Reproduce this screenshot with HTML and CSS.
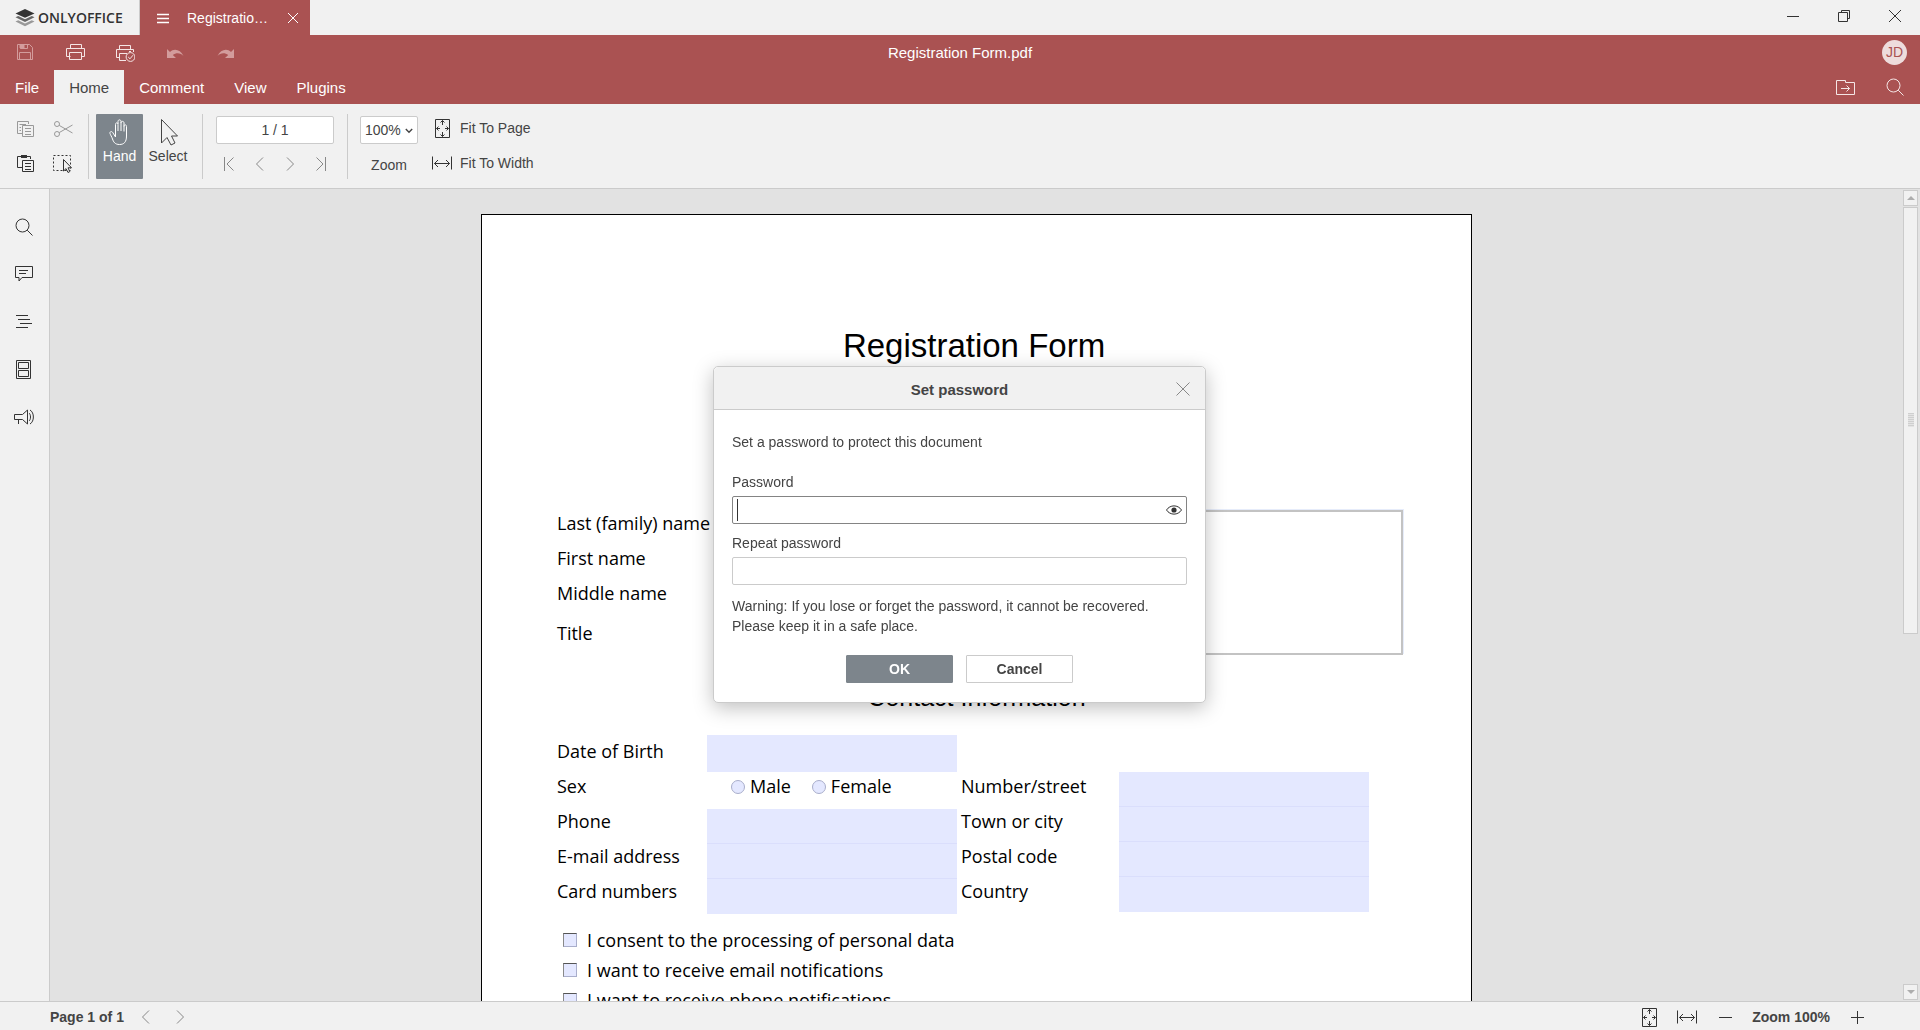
FILE: index.html
```html
<!DOCTYPE html>
<html lang="en">

<head>
    <meta charset="UTF-8">
    <meta name="viewport" content="width=device-width, initial-scale=1.0">
    <title>Registration Form.pdf</title>
    <link rel="stylesheet" href="styles.css">
</head>

<body>

    <!-- shared icons -->
    <svg class="sprite" aria-hidden="true">
        <symbol id="i-search" viewBox="0 0 20 20">
            <circle cx="8.5" cy="8.5" r="6.5" />
            <path d="M13.2 13.2L18.5 18.5" />
        </symbol>
        <symbol id="i-prev" viewBox="0 0 20 20"><path d="M13 3.5L6.5 10L13 16.5" /></symbol>
        <symbol id="i-next" viewBox="0 0 20 20"><path d="M7 3.5L13.5 10L7 16.5" /></symbol>
        <symbol id="i-page" viewBox="0 0 20 20">
            <path d="M3.5 1.5H17.5V19.5H3.5Z" />
            <path d="M10.5 2.5V7M8.5 4.5L10.5 2.5L12.5 4.5M10.5 18.5V14M8.5 16.5L10.5 18.5L12.5 16.5M4.5 10.5H8M6.5 8.5L4.5 10.5L6.5 12.5M16.5 10.5H13M14.5 8.5L16.5 10.5L14.5 12.5" />
        </symbol>
        <symbol id="i-width" viewBox="0 0 20 20">
            <path d="M.5 3.5V16.5M19.5 3.5V16.5M2.5 10.5H17.5M6 7L2.5 10.5L6 14M14 7L17.5 10.5L14 14" />
        </symbol>
        <symbol id="i-close" viewBox="0 0 20 20"><path d="M3.5 3.5L16.5 16.5M16.5 3.5L3.5 16.5" /></symbol>
    </svg>

    <header class="titlebar">
        <div class="brand">
            <svg class="brandIcon" viewBox="0 0 20 18">
                <path d="M10 0L19.5 4.4L10 8.8L.5 4.4Z" fill="#333" />
                <path d="M.5 8.3L3.2 7.1L10 10.2L16.8 7.1L19.5 8.3L10 12.9Z" fill="#666" />
                <path d="M.5 12.5L3.2 11.3L10 14.5L16.8 11.3L19.5 12.5L10 17.2Z" fill="#999" />
            </svg>
            <span>ONLYOFFICE</span>
        </div>
        <div class="docTab">
            <svg class="icon" viewBox="0 0 20 20"><path d="M4 6.5H16M4 10.5H16M4 14.5H16" stroke-width="1.4" /></svg>
            <span>Registratio…</span>
            <button class="tabClose" aria-label="Close tab"><svg class="icon" viewBox="0 0 20 20"><path d="M5 5L15 15M15 5L5 15" /></svg></button>
        </div>
        <div class="windowButtons">
            <button aria-label="Minimize"><svg class="icon" viewBox="0 0 20 20"><path d="M4 10.5H16" /></svg></button>
            <button aria-label="Restore"><svg class="icon" viewBox="0 0 20 20"><path d="M4.5 6.5H13.5V15.5H4.5ZM7.5 6.5V4.5H15.5V12.5H13.5" /></svg></button>
            <button aria-label="Close"><svg class="icon" viewBox="0 0 20 20"><path d="M4 4L16 16M16 4L4 16" /></svg></button>
        </div>
    </header>

    <div class="header">
        <div class="quickRow">
            <div class="quickButtons">
                <button class="dim" aria-label="Save"><svg class="icon" viewBox="0 0 20 20"><path d="M2.5 1.5H14.5L17.5 4.5V16.5H2.5ZM5.5 1.5V5.5H12.5V1.5M4.5 16.5V9.5H15.5V16.5" /><path d="M5 2H9V5H5Z" fill="currentColor" /></svg></button>
                <button aria-label="Print"><svg class="icon" viewBox="0 0 20 20"><path d="M5.5 5.5V1.5H16.5V5.5M5.5 13.5H1.5V5.5H19.5V13.5H16.5M4.5 9.5H16.5V16.5H4.5Z" /></svg></button>
                <button aria-label="Quick print"><svg class="icon" viewBox="0 0 20 20"><path d="M4.5 6.5V2.5H15.5V6.5M4.5 14.5H1.5V6.5H18.5V9M11 17.5H4.5V10.5H12M14 8.5H16" /><circle cx="15.5" cy="14" r="4.4" /><path d="M13.2 14L15 15.8L18 12.2" /></svg></button>
                <button class="dim" aria-label="Undo"><svg class="icon" viewBox="0 0 20 20"><path d="M2 6V15H11L7.8 12C11 9.5 15.5 9.5 18.5 13C15.5 6.5 9 5 5 9Z" fill="currentColor" stroke="none" /></svg></button>
                <button class="dim" aria-label="Redo"><svg class="icon" viewBox="0 0 20 20"><path d="M19 6V15H10L13.2 12C10 9.5 5.5 9.5 2.5 13C5.5 6.5 12 5 16 9Z" fill="currentColor" stroke="none" /></svg></button>
            </div>
            <div class="docName">Registration Form.pdf</div>
            <div class="user"><span class="avatar">JD</span></div>
        </div>
        <nav class="menuRow">
            <button>File</button>
            <button class="active">Home</button>
            <button>Comment</button>
            <button>View</button>
            <button>Plugins</button>
            <span class="spacer"></span>
            <button class="square" aria-label="Open file location"><svg class="icon" viewBox="0 0 20 20"><path d="M1.5 3.5H10.5V5.5H19.5V17.5H1.5ZM6 11.5H14.5M11.5 8.5L14.5 11.5L11.5 14.5" /></svg></button>
            <button class="square" aria-label="Search"><svg class="icon"><use href="#i-search" /></svg></button>
        </nav>
    </div>

    <div class="toolbar">
        <div class="clipGrid">
            <button class="off" aria-label="Copy"><svg class="icon" viewBox="0 0 20 20"><path d="M7 14.5H2.5V2.5H13.5V5M4.5 5.5H11M4.5 8.5H6M4.5 11.5H6M7.5 6.5H18.5V17.5H7.5ZM10 9.5H16M10 12.5H16M10 15.5H16" /></svg></button>
            <button class="off" aria-label="Cut"><svg class="icon" viewBox="0 0 20 20"><circle cx="4" cy="5" r="2.5" /><circle cx="4" cy="15" r="2.5" /><path d="M6.2 6.4L19.5 14M6.2 13.6L19.5 6" /></svg></button>
            <button aria-label="Paste"><svg class="icon" viewBox="0 0 20 20"><path d="M7 14.5H2.5V3.5H15.5V6M7.5 7.5H18.5V18.5H7.5ZM10 10.5H16M10 13.5H16M10 16.5H16" /><path d="M6 2H12V5H6Z" fill="currentColor" stroke="none" /></svg></button>
            <button aria-label="Select all"><svg class="icon" viewBox="0 0 20 20"><path d="M.5 2.5H17.5V17.5H.5Z" stroke-dasharray="2 2" /><path d="M10.5 6.5V18L13 15.6L15 19.5L16.8 18.6L15 14.8H18.5Z" fill="#f1f1f1" /></svg></button>
        </div>
        <span class="separator"></span>
        <button class="bigButton pressed"><svg class="bigIcon" viewBox="0 0 28 28"><path d="M9.5 15V6.5C9.5 4.3 12 4.3 12 6.5V13M12 6V3.5C12 1.3 15 1.3 15 3.5V13M15 5C15 2.8 18 2.8 18 5V13.5M18 8.5C18 6.3 20.5 6.3 20.5 8.5V18C20.5 24 18 26.5 13.5 26.5C9 26.5 7.5 24 6.5 21C5.7 18.5 4.5 17 4 15.5C3.5 13.5 5.7 12.8 6.8 14.6L9.5 19V15" /></svg>Hand</button>
        <button class="bigButton"><svg class="bigIcon" viewBox="0 0 28 28"><path d="M7.5 1.5V25L13 19.5L17 27L21 25L17.5 18H23.5Z" /></svg>Select</button>
        <span class="separator wide"></span>
        <div class="pageGroup">
            <input type="text" value="1 / 1" aria-label="Page number">
            <div class="pageNav">
                <button aria-label="First page"><svg class="icon" viewBox="0 0 20 20"><path d="M4.5 3V17M13.5 3.5L7 10L13.5 16.5" /></svg></button>
                <button aria-label="Previous page"><svg class="icon"><use href="#i-prev" /></svg></button>
                <button aria-label="Next page"><svg class="icon"><use href="#i-next" /></svg></button>
                <button aria-label="Last page"><svg class="icon" viewBox="0 0 20 20"><path d="M15.5 3V17M6.5 3.5L13 10L6.5 16.5" /></svg></button>
            </div>
        </div>
        <span class="separator"></span>
        <div class="zoomGroup">
            <div class="combo">
                <select id="zoom">
                    <option>50%</option>
                    <option selected>100%</option>
                    <option>200%</option>
                </select>
                <svg class="chevron" viewBox="0 0 8 6"><path d="M.8 1L4 4.2L7.2 1" /></svg>
            </div>
            <label for="zoom">Zoom</label>
        </div>
        <div class="fitGroup">
            <button><svg class="icon"><use href="#i-page" /></svg>Fit To Page</button>
            <button><svg class="icon"><use href="#i-width" /></svg>Fit To Width</button>
        </div>
    </div>

    <main class="main">
        <aside class="sidebar">
            <button aria-label="Find"><svg class="icon" viewBox="0 0 20 20"><circle cx="8.5" cy="9.5" r="6.5" /><path d="M13.2 14.2L18.5 19.5" /></svg></button>
            <button aria-label="Comments"><svg class="icon" viewBox="0 0 20 20"><path d="M1.5 2.5H18.5V13.5H8L5 17V13.5H1.5ZM5 6.5H14M5 9.5H12" /></svg></button>
            <button aria-label="Headings"><svg class="icon" viewBox="0 0 20 20"><path d="M2 3.5H14M4 7.5H16M6 11.5H18M2 15.5H14" /></svg></button>
            <button aria-label="Thumbnails"><svg class="icon" viewBox="0 0 20 20"><path d="M2.5 .5H16.5V18.5H2.5ZM4.5 2.5H14.5V8.5H4.5ZM4.5 10.5H14.5V16.5H4.5Z" /></svg></button>
            <button aria-label="Feedback"><svg class="icon" viewBox="0 0 20 20"><path d="M.5 6.5H8.5L13.5 2V16L8.5 11.5H.5ZM4.5 11.5V16M15 5C17 6.5 17 11.5 15 13M16 2C20.5 4.5 20.5 13.5 16 16" /></svg></button>
        </aside>

        <div class="canvas">
            <article class="page">
                <h1>Registration Form</h1>
                <div class="personal">
                    <div class="labels">
                        <span>Last (family) name</span>
                        <span>First name</span>
                        <span>Middle name</span>
                        <span class="apart">Title</span>
                    </div>
                    <div class="photo"></div>
                </div>
                <h2>Contact Information</h2>
                <form class="contact">
                    <div class="labels">
                        <label for="birth">Date of Birth</label>
                        <span>Sex</span>
                        <label for="phone">Phone</label>
                        <label for="email">E-mail address</label>
                        <label for="card">Card numbers</label>
                    </div>
                    <div class="fields">
                        <input type="text" id="birth">
                        <div class="radios">
                            <label><input type="radio" name="sex">Male</label>
                            <label><input type="radio" name="sex">Female</label>
                        </div>
                        <input type="text" id="phone">
                        <input type="text" id="email">
                        <input type="text" id="card">
                    </div>
                    <div class="labels second">
                        <label for="street">Number/street</label>
                        <label for="city">Town or city</label>
                        <label for="postal">Postal code</label>
                        <label for="country">Country</label>
                    </div>
                    <div class="fields second">
                        <input type="text" id="street">
                        <input type="text" id="city">
                        <input type="text" id="postal">
                        <input type="text" id="country">
                    </div>
                </form>
                <div class="consents">
                    <label><input type="checkbox">I consent to the processing of personal data</label>
                    <label><input type="checkbox">I want to receive email notifications</label>
                    <label><input type="checkbox">I want to receive phone notifications</label>
                </div>
            </article>
        </div>

        <div class="scrollbar">
            <button aria-label="Scroll up"><svg viewBox="0 0 8 4"><path d="M4 0L8 4H0Z" /></svg></button>
            <div class="track">
                <div class="thumb"><span class="grip"></span></div>
            </div>
            <button aria-label="Scroll down"><svg viewBox="0 0 8 4"><path d="M0 0H8L4 4Z" /></svg></button>
        </div>
    </main>

    <footer class="statusbar">
        <span class="pageCount">Page 1 of 1</span>
        <button class="pale" aria-label="Previous page"><svg class="icon"><use href="#i-prev" /></svg></button>
        <button class="pale" aria-label="Next page"><svg class="icon"><use href="#i-next" /></svg></button>
        <span class="spacer"></span>
        <button aria-label="Fit to page"><svg class="icon"><use href="#i-page" /></svg></button>
        <button aria-label="Fit to width"><svg class="icon"><use href="#i-width" /></svg></button>
        <button aria-label="Zoom out"><svg class="icon" viewBox="0 0 20 20"><path d="M4 10.5H17" /></svg></button>
        <span class="zoomText">Zoom 100%</span>
        <button aria-label="Zoom in"><svg class="icon" viewBox="0 0 20 20"><path d="M4 10.5H17M10.5 4V17" /></svg></button>
    </footer>

    <div class="overlay">
        <section class="dialog" role="dialog" aria-labelledby="dialogTitle">
            <header class="dialogHeader">
                <h3 id="dialogTitle">Set password</h3>
                <button class="dialogClose" aria-label="Close"><svg class="icon"><use href="#i-close" /></svg></button>
            </header>
            <form class="dialogBody">
                <p class="message">Set a password to protect this document</p>
                <label for="password">Password</label>
                <div class="passwordBox">
                    <input type="password" id="password" class="focused">
                    <span class="caret"></span>
                    <button type="button" class="eye" aria-label="Show password"><svg class="icon" viewBox="0 0 20 20"><path d="M2.5 10C6 4.5 14 4.5 17.5 10C14 15.5 6 15.5 2.5 10Z" /><circle cx="10" cy="10" r="2.6" fill="currentColor" stroke="none" /></svg></button>
                </div>
                <label for="repeat">Repeat password</label>
                <input type="password" id="repeat">
                <p class="warning">Warning: If you lose or forget the password, it cannot be recovered. Please keep it in a safe place.</p>
                <div class="dialogButtons">
                    <button type="button" class="primary">OK</button>
                    <button type="button">Cancel</button>
                </div>
            </form>
        </section>
    </div>

</body>

</html>
```

FILE: styles.css
```css
* {
    box-sizing: border-box;
}

body {
    margin: 0;
    height: 100vh;
    display: flex;
    flex-direction: column;
    overflow: hidden;
    background-color: #f1f1f1;
    color: #444;
    font-family: "Liberation Sans", Arial, sans-serif;
    font-size: 14px;
}

button {
    display: flex;
    align-items: center;
    justify-content: center;
    padding: 0;
    border: none;
    background: none;
    color: inherit;
    font: inherit;
    cursor: pointer;
}

input,
select {
    font: inherit;
    color: inherit;
}

.sprite {
    position: absolute;
    width: 0;
    height: 0;
}

.icon,
.bigIcon {
    flex: none;
    width: 20px;
    height: 20px;
    fill: none;
    stroke: currentColor;
    stroke-width: 1;
}

.spacer {
    flex: 1;
}

/* title bar */
.titlebar {
    display: flex;
    flex: none;
    height: 35px;
    color: #333;
}

.brand {
    display: flex;
    align-items: center;
    gap: 3px;
    width: 140px;
    padding-left: 15px;
    border-right: 1px solid #cbcbcb;
    font-family: "Open Sans", sans-serif;
    font-size: 14px;
    font-weight: 600;
}

.brandIcon {
    width: 20px;
    height: 18px;
}

.docTab {
    display: flex;
    align-items: center;
    width: 170px;
    padding: 0 7px 0 13px;
    background-color: #aa5252;
    color: #fff;
}

.docTab span {
    flex: 1;
    padding-left: 14px;
}

.windowButtons {
    display: flex;
    margin-left: auto;
}

.windowButtons button {
    width: 51px;
    height: 32px;
}

/* red header */
.header {
    flex: none;
    background-color: #aa5252;
    color: #fff;
    font-size: 15px;
}

.quickRow {
    display: grid;
    grid-template-columns: 1fr auto 1fr;
    align-items: center;
    height: 35px;
}

.quickButtons {
    display: flex;
}

.quickButtons button,
.square {
    width: 50px;
    height: 34px;
    color: #f5e6e6;
}

.quickButtons .dim {
    color: #d39c9c;
}

.user {
    display: flex;
    justify-content: flex-end;
    padding-right: 13px;
}

.avatar {
    width: 25px;
    height: 25px;
    border-radius: 50%;
    background-color: #eedcdc;
    color: #aa5252;
    font-size: 14px;
    line-height: 24px;
    text-align: center;
}

.menuRow {
    display: flex;
    height: 34px;
}

.menuRow button {
    padding: 0 15px;
}

.menuRow .square {
    padding: 0;
}

.menuRow .active {
    background-color: #f1f1f1;
    color: #444;
}

/* toolbar */
.toolbar {
    display: flex;
    flex: none;
    height: 85px;
    padding: 10px 0 9px;
    border-bottom: 1px solid #cbcbcb;
}

.clipGrid {
    display: grid;
    grid-template-columns: 38px 38px;
    grid-template-rows: 30px 38px;
    width: 88px;
    padding-left: 6px;
    color: #333;
}

.clipGrid .off {
    color: #999;
}

.separator {
    width: 1px;
    height: 65px;
    margin-right: 7px;
    background-color: #cbcbcb;
}

.separator.wide {
    margin: 0 13px 0 9px;
}

.bigButton {
    flex-direction: column;
    justify-content: flex-start;
    gap: 2px;
    width: 50px;
    height: 65px;
    padding-top: 4px;
    border-radius: 1px;
    line-height: 16px;
}

.bigButton.pressed {
    width: 47px;
    background-color: #7d858c;
    color: #fff;
}

.bigIcon {
    width: 28px;
    height: 28px;
}

.pageGroup {
    width: 118px;
    margin-right: 13px;
    padding-top: 2px;
}

.pageGroup input {
    display: block;
    width: 100%;
    height: 28px;
    border: 1px solid #cbcbcb;
    border-radius: 2px;
    text-align: center;
}

.pageNav {
    display: flex;
    justify-content: space-between;
    padding: 10px 4px 0;
    color: #888;
}

.zoomGroup {
    display: flex;
    flex-direction: column;
    align-items: center;
    gap: 13px;
    margin-left: 5px;
    padding-top: 2px;
}

.combo {
    position: relative;
}

.combo select {
    display: block;
    width: 58px;
    height: 28px;
    padding: 0 0 0 4px;
    border: 1px solid #cbcbcb;
    border-radius: 2px;
    background-color: #fff;
    appearance: none;
}

.chevron {
    position: absolute;
    top: 12px;
    right: 5px;
    width: 8px;
    height: 6px;
    fill: none;
    stroke: #444;
    stroke-width: 1.4;
}

.fitGroup {
    display: flex;
    flex-direction: column;
    gap: 15px;
    margin-left: 14px;
    padding-top: 4px;
}

.fitGroup button {
    justify-content: flex-start;
    gap: 8px;
}

.fitGroup .icon,
.statusbar .icon {
    color: #333;
}

/* document area */
.main {
    display: flex;
    flex: 1;
    min-height: 0;
}

.sidebar {
    flex: none;
    width: 50px;
    padding-top: 13px;
    border-right: 1px solid #cbcbcb;
    color: #333;
}

.sidebar button {
    width: 48px;
    height: 48px;
}

.canvas {
    flex: 1;
    overflow: hidden;
    padding-top: 25px;
    background-color: #e2e2e2;
}

.page {
    width: 991px;
    min-height: 1400px;
    margin: 0 auto;
    padding-top: 111px;
    border: 1px solid #000;
    background-color: #fff;
    color: #000;
    font-family: "Open Sans", "Noto Sans", sans-serif;
    font-size: 18px;
}

.page h1,
.page h2 {
    margin: 0;
    font-family: "Liberation Sans", Arial, sans-serif;
    font-weight: normal;
    text-align: center;
}

.page h1 {
    padding-right: 5px;
    font-size: 33px;
    line-height: 40px;
}

.page h2 {
    font-size: 25px;
    line-height: 30px;
}

.personal {
    display: flex;
    justify-content: space-between;
    margin: 140px 68px 27px 75px;
}

.photo {
    width: 230px;
    height: 145px;
    margin-top: 4px;
    border: 2px solid #c3c3c3;
    box-shadow: 1px -1px 0 #e6ecfa;
}

.labels {
    display: flex;
    flex-direction: column;
    width: 150px;
    line-height: 35px;
    white-space: nowrap;
}

.labels .apart {
    margin-top: 5px;
}

.contact {
    display: flex;
    margin: 22px 68px 0 75px;
}

.fields {
    width: 250px;
    padding-top: 1px;
}

.fields input[type="text"] {
    display: block;
    width: 100%;
    height: 35px;
    padding: 0 4px;
    border: none;
    border-bottom: 1px solid #dadefc;
    background-color: #e4e8ff;
}

.fields #birth {
    height: 37px;
}

.fields input[type="text"]#birth,
.fields input[type="text"]:last-child {
    border-bottom: none;
}

.labels.second {
    width: 158px;
    margin-left: 4px;
    padding-top: 35px;
}

.fields.second {
    padding-top: 38px;
}

.radios {
    display: flex;
    align-items: flex-start;
    gap: 21px;
    height: 37px;
    padding-left: 24px;
    line-height: 29px;
}

.radios label {
    display: flex;
    align-items: center;
    gap: 5px;
}

.radios input,
.consents input {
    width: 14px;
    height: 14px;
    margin: 0;
    appearance: none;
    border: 1px solid #a9aecb;
    background-color: #e4e8ff;
}

.radios input {
    border-radius: 50%;
}

.consents {
    margin: 11px 0 0 81px;
    line-height: 30px;
}

.consents label {
    display: flex;
    align-items: center;
    gap: 10px;
}

.consents input {
    border-top-color: #555;
    border-left-color: #888;
}

.scrollbar {
    display: flex;
    flex-direction: column;
    flex: none;
    width: 17px;
    padding: 1px 2px 1px 0;
    background-color: #e2e2e2;
}

.scrollbar button,
.thumb {
    width: 15px;
    border: 1px solid #cbcbcb;
    background-color: #f1f1f1;
}

.scrollbar button {
    flex: none;
    height: 16px;
}

.scrollbar svg {
    width: 8px;
    height: 4px;
    fill: #adadad;
}

.track {
    flex: 1;
    padding: 1px 0;
}

.thumb {
    display: flex;
    align-items: center;
    justify-content: center;
    height: 55%;
}

.grip {
    width: 6px;
    height: 14px;
    background: repeating-linear-gradient(#cfcfcf 0 1px, #e4e4e4 1px 2px);
}

/* status bar */
.statusbar {
    display: flex;
    align-items: center;
    flex: none;
    height: 29px;
    padding: 2px 44px 0 50px;
    border-top: 1px solid #cbcbcb;
    font-weight: bold;
}

.statusbar button {
    width: 38px;
    height: 26px;
}

.statusbar .pale {
    width: 34px;
}

.statusbar .pale .icon {
    color: #888;
}

.pageCount {
    margin-right: 5px;
}

.zoomText {
    margin: 0 8px;
}

/* password dialog */
.overlay {
    position: fixed;
    inset: 0;
    display: flex;
    align-items: center;
    justify-content: center;
    padding: 39px 1px 0 0;
}

.dialog {
    width: 493px;
    border: 1px solid #cbcbcb;
    border-radius: 5px;
    background-color: #fff;
    box-shadow: 0 5px 20px rgba(0, 0, 0, 0.25);
    line-height: 20px;
}

.dialogHeader {
    position: relative;
    height: 43px;
    border-bottom: 1px solid #cbcbcb;
    border-radius: 5px 5px 0 0;
    background-color: #f1f1f1;
}

.dialogHeader h3 {
    margin: 0;
    font-size: 15px;
    line-height: 45px;
    text-align: center;
}

.dialogClose {
    position: absolute;
    top: 12px;
    right: 12px;
    color: #888;
}

.dialogBody {
    padding: 22px 18px 19px;
}

.dialogBody p {
    margin: 0;
}

.dialogBody label {
    display: block;
    margin-bottom: 4px;
}

.dialogBody input {
    display: block;
    width: 100%;
    height: 28px;
    padding: 0 4px;
    border: 1px solid #cbcbcb;
    border-radius: 2px;
}

.dialogBody .focused {
    border-color: #848484;
    caret-color: transparent;
}

.dialogBody .message {
    margin-bottom: 20px;
}

.dialogBody .warning {
    margin-top: 11px;
}

.passwordBox {
    position: relative;
    margin-bottom: 9px;
}

.caret {
    position: absolute;
    top: 3px;
    left: 5px;
    width: 1px;
    height: 22px;
    background-color: #333;
}

.eye {
    position: absolute;
    top: 4px;
    right: 3px;
    color: #333;
}

.dialogButtons {
    display: flex;
    justify-content: center;
    gap: 13px;
    margin-top: 19px;
}

.dialogButtons button {
    width: 107px;
    height: 28px;
    border: 1px solid #cbcbcb;
    border-radius: 1px;
    font-weight: bold;
}

.dialogButtons .primary {
    border-color: #7d858c;
    background-color: #7d858c;
    color: #fff;
}
```
